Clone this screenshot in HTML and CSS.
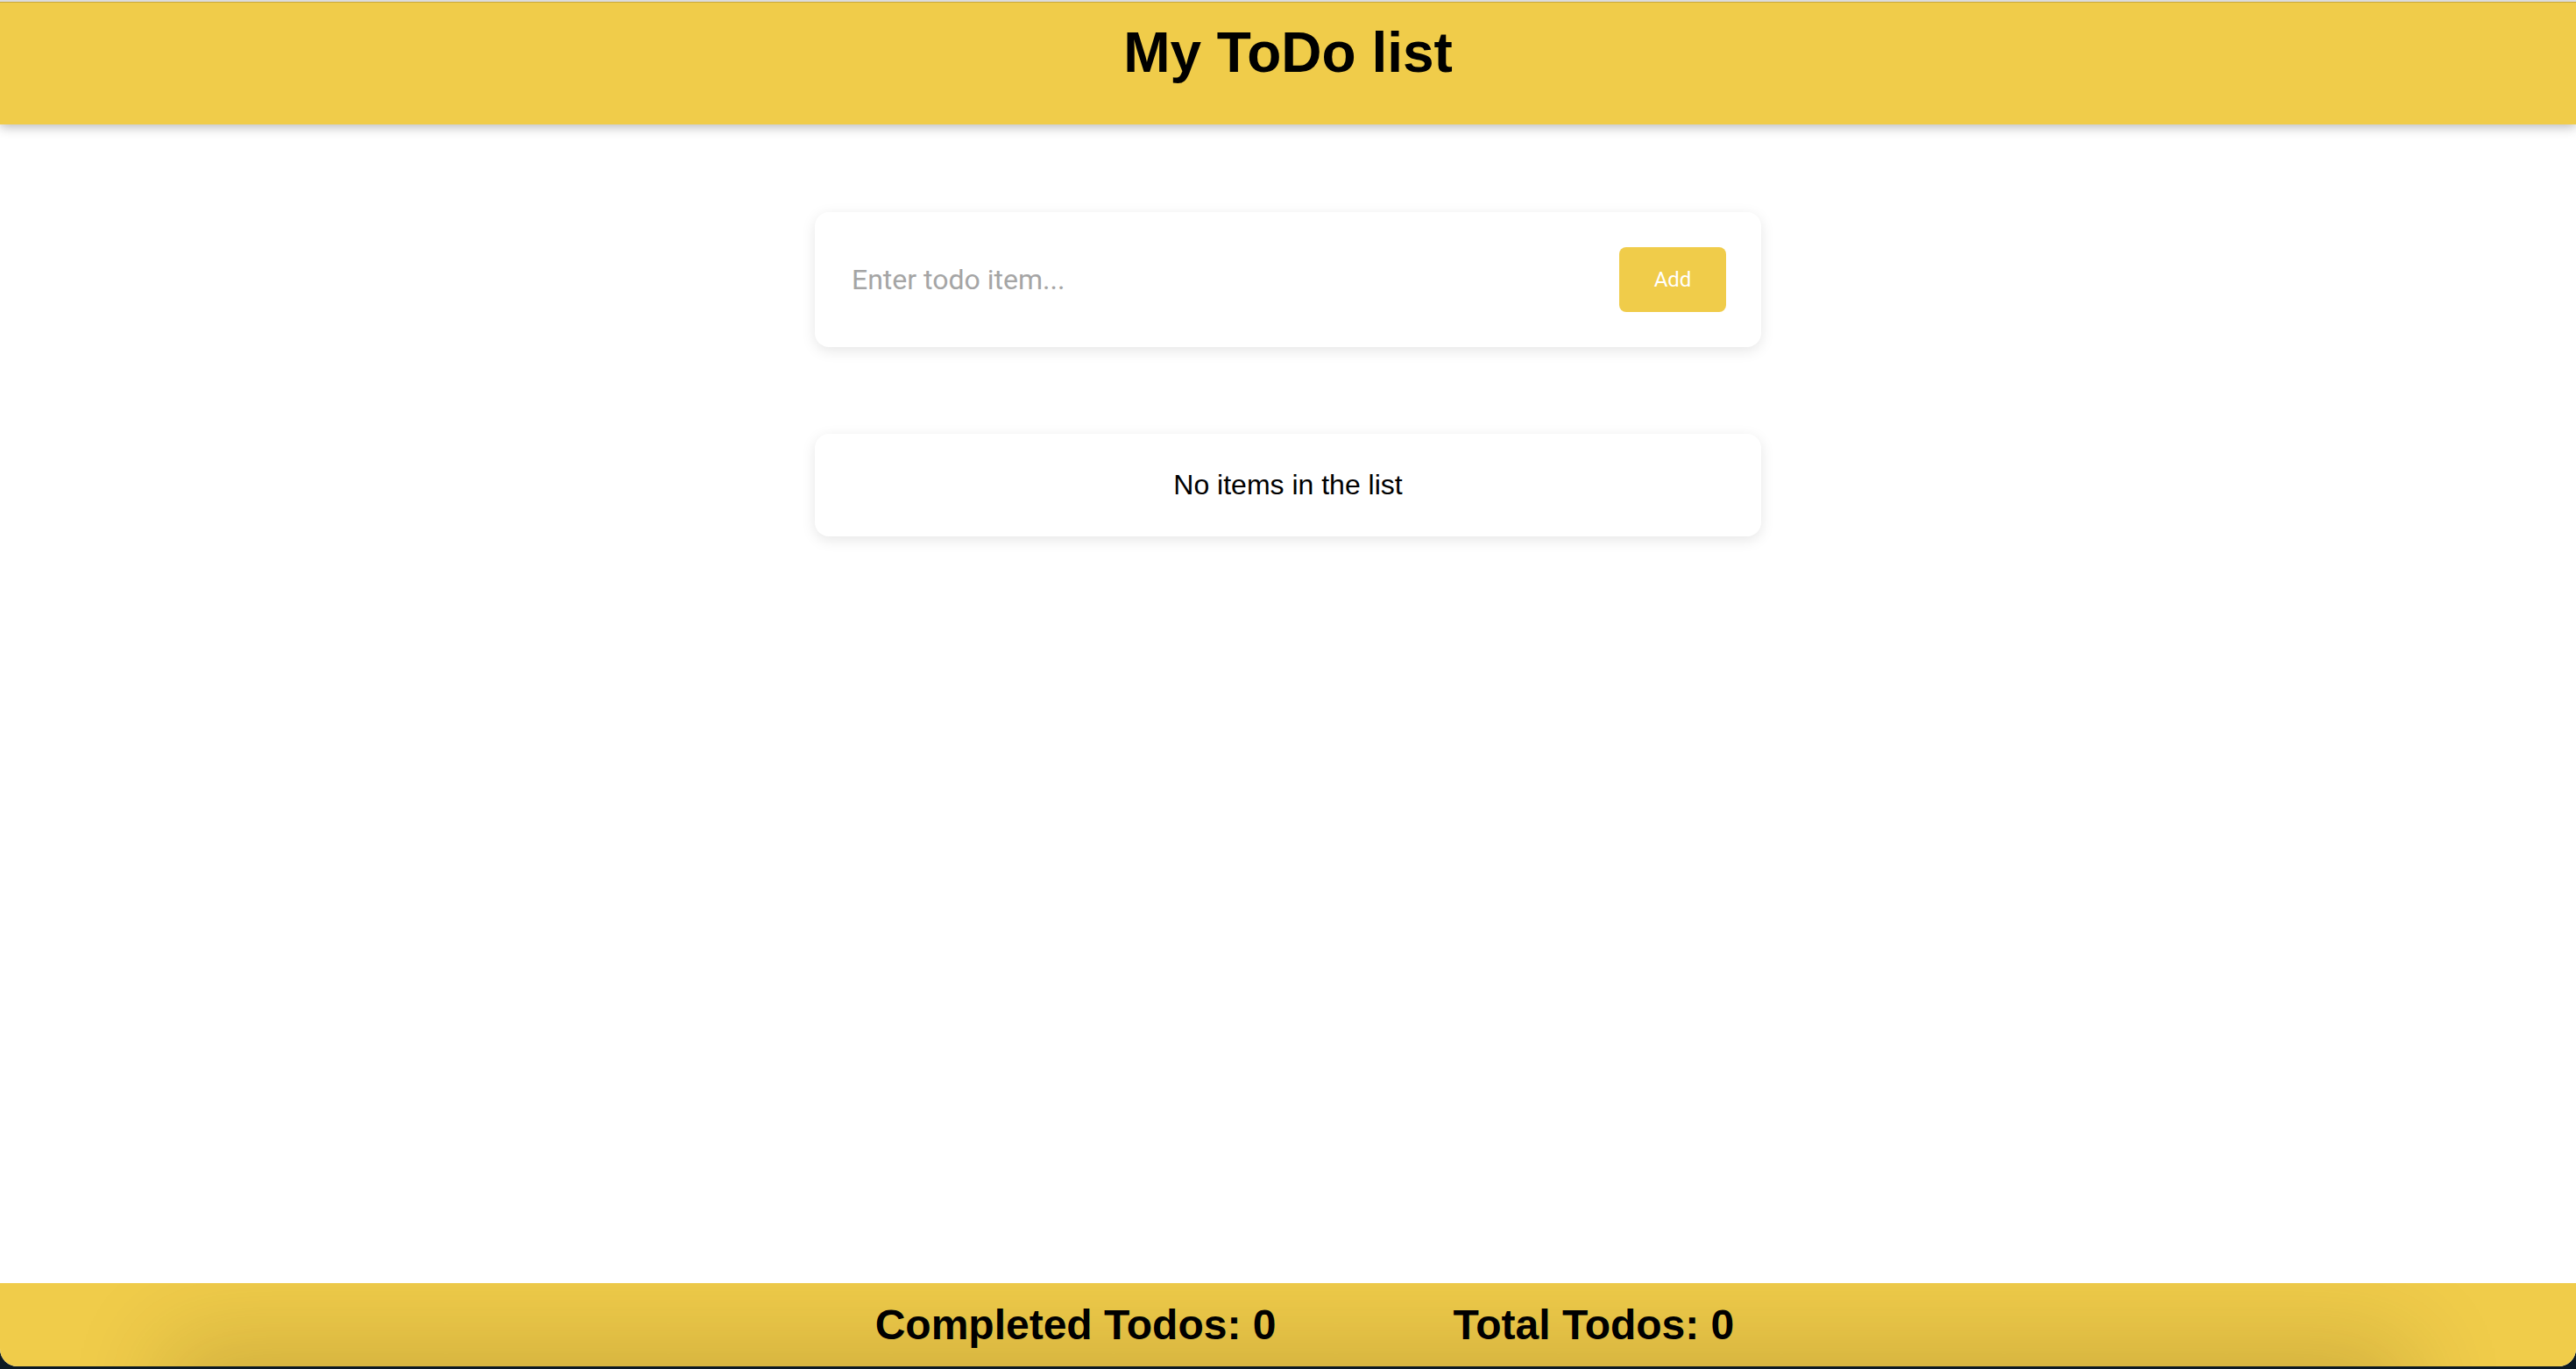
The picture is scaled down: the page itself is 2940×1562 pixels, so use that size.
FILE: index.html
```html
<!DOCTYPE html>
<html lang="en">
<head>
<meta charset="utf-8">
<title>My ToDo list</title>
<link rel="stylesheet" href="styles.css">
</head>
<body>
<div class="window">
  <header class="app-header">
    <h1 class="app-title">My ToDo list</h1>
  </header>
  <main class="content">
    <form class="card add-card" onsubmit="return false;">
      <input class="todo-input" type="text" placeholder="Enter todo item...">
      <button class="add-btn" type="submit">Add</button>
    </form>
    <section class="card list-card">
      <p class="empty-text">No items in the list</p>
    </section>
  </main>
  <footer class="app-footer">
    <h2 class="stat">Completed Todos: 0</h2>
    <h2 class="stat">Total Todos: 0</h2>
  </footer>
</div>
</body>
</html>
```
FILE: styles.css
```css
* {
  box-sizing: border-box;
}

html, body {
  margin: 0;
  padding: 0;
  height: 100%;
}

body {
  background: #0c1a24;
  font-family: "Liberation Sans", Arial, Helvetica, sans-serif;
  color: #000;
}

.window {
  height: calc(100vh - 3px);
  display: flex;
  flex-direction: column;
  background: #ffffff;
  border-top: 2px solid #dcdcdc;
  border-radius: 0 0 20px 20px;
  overflow: hidden;
}

.app-header {
  position: relative;
  z-index: 2;
  background: #f0cc4a;
  border-top: 1px solid #c9a93b;
  padding: 20px 0 45px;
  box-shadow: 0 3px 12px rgba(0, 0, 0, 0.28);
  text-align: center;
}

.app-title {
  margin: 0;
  font-size: 64px;
  line-height: 74px;
  font-weight: 700;
}

.content {
  flex: 1;
  display: flex;
  flex-direction: column;
  align-items: center;
  gap: 99px;
  padding-top: 100px;
}

.card {
  width: 1080px;
  background: #fff;
  border-radius: 16px;
  box-shadow: 0 4px 16px rgba(0, 0, 0, 0.1);
}

.add-card {
  margin: 0;
  display: flex;
  align-items: center;
  gap: 24px;
  padding: 40px;
}

.todo-input {
  flex: 1;
  height: 74px;
  border: none;
  outline: none;
  background: transparent;
  padding: 0 2px;
  font-family: Roboto, "Noto Sans", sans-serif;
  font-size: 32px;
  color: #333;
}

.todo-input::placeholder {
  color: #a5a5a5;
}

.add-btn {
  width: 122px;
  height: 74px;
  border: none;
  border-radius: 8px;
  background: #f0cc4a;
  color: #fff;
  font-family: Roboto, "Noto Sans", sans-serif;
  font-size: 24px;
  cursor: pointer;
}

.list-card {
  padding: 40px;
  text-align: center;
}

.empty-text {
  margin: 0;
  font-size: 32px;
  line-height: 37px;
}

.app-footer {
  position: relative;
  height: 95px;
  flex-shrink: 0;
  display: flex;
  justify-content: center;
  align-items: center;
  gap: 202px;
  padding-left: 38px;
  background: #f0cc4a;
  overflow: hidden;
}

.app-footer::after {
  content: "";
  position: absolute;
  left: 220px;
  right: 220px;
  bottom: -80px;
  height: 80px;
  box-shadow: 0 0 110px 30px rgba(60, 40, 0, 0.18);
}

.stat {
  position: relative;
  z-index: 1;
  margin: 0;
  font-size: 48px;
  font-weight: 700;
  white-space: nowrap;
}
```
